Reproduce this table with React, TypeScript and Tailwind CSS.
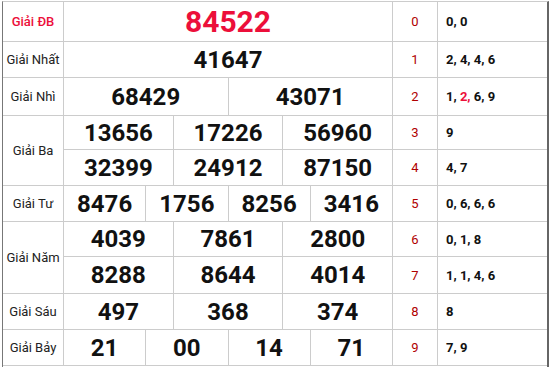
import React from "react";

type Row = { label: string; lines: string[][]; special?: boolean };

const rows: Row[] = [
  { label: "Giải ĐB", lines: [["84522"]], special: true },
  { label: "Giải Nhất", lines: [["41647"]] },
  { label: "Giải Nhì", lines: [["68429", "43071"]] },
  { label: "Giải Ba", lines: [["13656", "17226", "56960"], ["32399", "24912", "87150"]] },
  { label: "Giải Tư", lines: [["8476", "1756", "8256", "3416"]] },
  { label: "Giải Năm", lines: [["4039", "7861", "2800"], ["8288", "8644", "4014"]] },
  { label: "Giải Sáu", lines: [["497", "368", "374"]] },
  { label: "Giải Bảy", lines: [["21", "00", "14", "71"]] },
];

const loto: { head: string; tail: React.ReactNode }[] = [
  { head: "0", tail: "0, 0" },
  { head: "1", tail: "2, 4, 4, 6" },
  {
    head: "2",
    tail: (
      <>
        {"1, "}
        <span className="text-[#ec0f3a]">2,</span>
        {" 6, 9"}
      </>
    ),
  },
  { head: "3", tail: "9" },
  { head: "4", tail: "4, 7" },
  { head: "5", tail: "0, 6, 6, 6" },
  { head: "6", tail: "0, 1, 8" },
  { head: "7", tail: "1, 1, 4, 6" },
  { head: "8", tail: "8" },
  { head: "9", tail: "7, 9" },
];

export default function App() {
  let lotoIndex = 0;
  const cells: React.ReactNode[] = [];

  rows.forEach((row, ri) => {
    cells.push(
      <div
        key={`label-${ri}`}
        className={`flex items-center justify-center border-r border-b border-[#cccccc] text-[13px] ${
          row.special ? "text-[#ec0f3a] font-medium" : "text-[#222]"
        } ${row.lines.length === 2 ? "row-span-2" : ""}`}
      >
        {row.label}
      </div>
    );
    row.lines.forEach((line, li) => {
      const l = loto[lotoIndex++];
      cells.push(
        <div key={`nums-${ri}-${li}`} className="flex border-r border-b border-[#cccccc]">
          {line.map((n, ni) => (
            <div
              key={ni}
              className={`flex-1 flex items-center justify-center font-bold ${
                row.special ? "text-[30px] text-[#ec0f3a]" : "text-[24px] text-[#111]"
              } ${ni < line.length - 1 ? "border-r border-[#cccccc]" : ""}`}
            >
              {n}
            </div>
          ))}
        </div>,
        <div
          key={`head-${ri}-${li}`}
          className="flex items-center justify-center border-r border-b border-[#cccccc] text-[13px] text-[#b00000]"
        >
          {l.head}
        </div>,
        <div
          key={`tail-${ri}-${li}`}
          className="flex items-center pl-[8px] border-b border-[#cccccc] text-[13px] font-bold text-[#111]"
        >
          <span>{l.tail}</span>
        </div>
      );
    });
  });

  return (
    <div className="w-[553px] h-[367px] bg-white overflow-hidden font-['Roboto',sans-serif]">
      <div className="ml-[2px] mt-px w-[547px] border-l border-l-[#777777] border-r-2 border-r-[#666666] border-t border-t-[#cccccc]">
        <div className="grid grid-cols-[61px_329px_45px_109px] grid-rows-[40px_36px_38px_34px_36px_36px_35px_37px_36px_36px] leading-none">
          {cells}
        </div>
        <div className="h-[4px]" />
      </div>
    </div>
  );
}
